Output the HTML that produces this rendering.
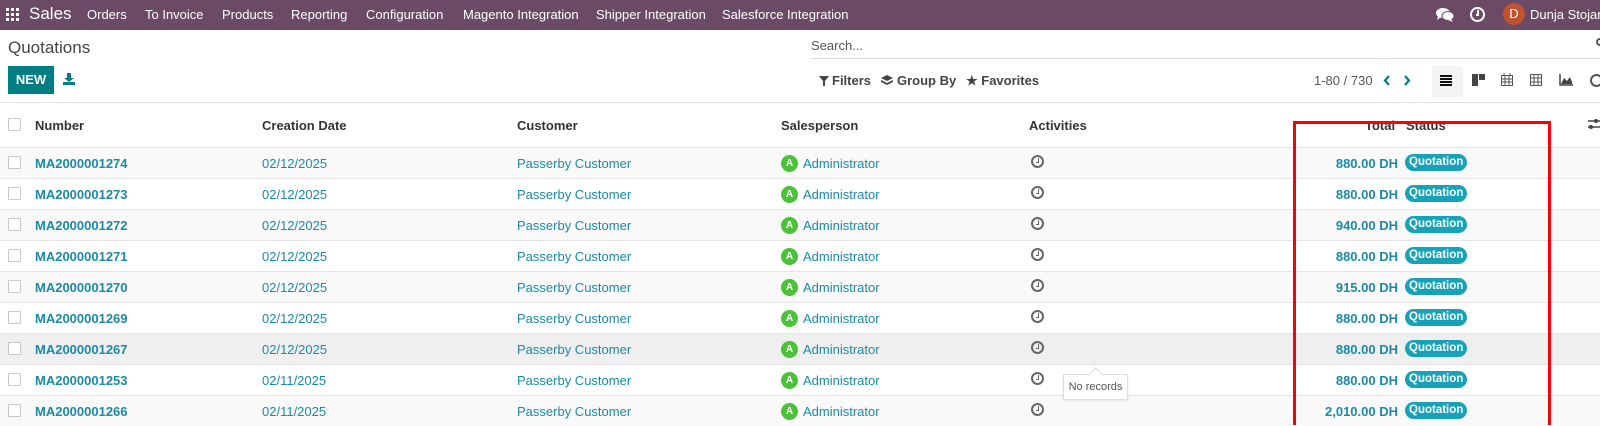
<!DOCTYPE html>
<html><head><meta charset="utf-8"><style>
*{box-sizing:border-box;margin:0;padding:0}
body{width:1600px;height:425px;overflow:hidden;background:#fff;font-family:"Liberation Sans",sans-serif;font-size:13px;color:#374151;position:relative}
.a{position:absolute;white-space:nowrap}
.nav{position:absolute;left:0;top:0;width:1600px;height:30px;background:#6b4a65;color:#fff}
.nav .a{top:7px;font-size:13px}
.row{position:absolute;left:0;width:1600px;height:31px;border-top:1px solid #e5e5e5}
.cb{position:absolute;left:8px;width:13px;height:13px;border:1px solid #c8c8c8;background:#fff;border-radius:1px}
.lnk{color:#1b8aa6}
.b{font-weight:bold}
.badge{position:absolute;left:1405px;background:#17a2b8;color:#fff;font-weight:bold;font-size:11.5px;border-radius:9px;padding:2px 4px;height:17px;line-height:13px}
.av{position:absolute;left:781px;width:17px;height:17px;border-radius:50%;background:#4cc23a;color:#fff;font-size:10px;font-weight:bold;text-align:center;line-height:17px}
.clk{position:absolute;left:1031px;width:13px;height:13px;border:2px solid #666;border-radius:50%}
.clk:after{content:"";position:absolute;left:3px;top:1px;width:2px;height:4px;border-right:1.5px solid #666;border-bottom:1.5px solid #666}
.tot{position:absolute;right:202px;color:#1b8aa6;font-weight:bold}
</style></head><body>
<div class="nav">
 <svg class="a" style="left:6px;top:8px" width="13" height="13" viewBox="0 0 13 13" fill="#fff"><rect x="0" y="0" width="3" height="3"/><rect x="5" y="0" width="3" height="3"/><rect x="10" y="0" width="3" height="3"/><rect x="0" y="5" width="3" height="3"/><rect x="5" y="5" width="3" height="3"/><rect x="10" y="5" width="3" height="3"/><rect x="0" y="10" width="3" height="3"/><rect x="5" y="10" width="3" height="3"/><rect x="10" y="10" width="3" height="3"/></svg>
 <span class="a" style="left:29px;top:4px;font-size:17px">Sales</span>
 <span class="a" style="left:87px">Orders</span>
 <span class="a" style="left:145px">To Invoice</span>
 <span class="a" style="left:222px">Products</span>
 <span class="a" style="left:291px">Reporting</span>
 <span class="a" style="left:366px">Configuration</span>
 <span class="a" style="left:463px">Magento Integration</span>
 <span class="a" style="left:596px">Shipper Integration</span>
 <span class="a" style="left:722px">Salesforce Integration</span>
 <svg class="a" style="left:1436px;top:8px" width="18" height="14" viewBox="0 0 18 14" fill="#fff"><ellipse cx="7" cy="5" rx="7" ry="5"/><path d="M2 8 L1 12 L5 9Z"/><ellipse cx="12" cy="8" rx="6" ry="4.5" stroke="#6b4a65" stroke-width="1"/><path d="M15 11 L17 14 L12 12Z"/></svg>
 <span class="a" style="left:1470px;top:7px;width:15px;height:15px;border:2px solid #fff;border-radius:50%"></span>
 <span class="a" style="left:1476px;top:10px;width:3px;height:6px;border-right:2px solid #fff;border-bottom:2px solid #fff"></span>
 <span class="a" style="left:1503px;top:3px;width:22px;height:22px;border-radius:50%;background:#c0532d;text-align:center;line-height:22px;font-size:13px">D</span>
 <span class="a" style="left:1530px">Dunja Stojanovic</span>
</div>
<span class="a" style="left:8px;top:38px;font-size:17px;color:#444">Quotations</span>
<span class="a" style="left:8px;top:66px;width:46px;height:28px;background:#017e84;color:#fff;font-weight:bold;text-align:center;line-height:28px;font-size:13px">NEW</span>
<svg class="a" style="left:63px;top:73px" width="12" height="12" viewBox="0 0 12 12" fill="#017e84"><path d="M4 0h4v5h3L6 9 1 5h3z"/><rect x="0" y="9" width="12" height="3"/></svg>
<span class="a" style="left:811px;top:38px;color:#555">Search...</span>
<div class="a" style="left:810px;top:58px;width:790px;height:1px;background:#dcdcdc"></div>
<span class="a" style="left:1596px;top:38px;width:8px;height:8px;border:2px solid #555;border-radius:50%"></span>
<svg class="a" style="left:819px;top:76px" width="10" height="10"><path d="M0 0h10L6 5v5H4V5z" fill="#444"/></svg>
<span class="a" style="left:832px;top:73px;color:#444;font-weight:bold">Filters</span>
<svg class="a" style="left:881px;top:75px" width="12" height="11" fill="#444"><path d="M6 0l6 3-6 3-6-3z"/><path d="M0 5l6 3 6-3v2l-6 3-6-3z"/></svg>
<span class="a" style="left:897px;top:73px;color:#444;font-weight:bold">Group By</span>
<span class="a" style="left:966px;top:73px;color:#444;font-weight:bold">&#x2605; Favorites</span>
<span class="a" style="left:1314px;top:73px;color:#555">1-80 / 730</span>
<svg class="a" style="left:1383px;top:75px" width="8" height="11"><path d="M6 1L2 5.5 6 10" stroke="#017e84" stroke-width="2.2" fill="none"/></svg>
<svg class="a" style="left:1403px;top:75px" width="8" height="11"><path d="M2 1l4 4.5L2 10" stroke="#017e84" stroke-width="2.2" fill="none"/></svg>
<div class="a" style="left:1432px;top:66px;width:31px;height:31px;background:#f3f4f6"></div>
<svg class="a" style="left:1440px;top:75px" width="12" height="11"><rect y="0" width="12" height="2" fill="#111"/><rect y="3" width="12" height="2" fill="#111"/><rect y="6" width="12" height="2" fill="#111"/><rect y="9" width="12" height="2" fill="#111"/></svg>
<svg class="a" style="left:1472px;top:74px" width="13" height="12"><rect width="6" height="12" fill="#444"/><rect x="7" width="6" height="6" fill="#444"/></svg>
<svg class="a" style="left:1501px;top:73px" width="12" height="13" fill="none" stroke="#555"><rect x="0.5" y="2.5" width="11" height="10"/><path d="M0 6h12M0 9h12M4 3v10M8 3v10M3 0v3M9 0v3"/></svg>
<svg class="a" style="left:1530px;top:73px" width="12" height="13" fill="none" stroke="#555"><rect x="0.5" y="1.5" width="11" height="11"/><path d="M0 5h12M0 9h12M4 1v12M8 1v12"/></svg>
<svg class="a" style="left:1559px;top:74px" width="14" height="12"><path d="M1 0v11h13" stroke="#444" fill="none" stroke-width="1.5"/><path d="M2 10L5 4 8 7 11 3 13 8v2z" fill="#444"/></svg>
<span class="a" style="left:1590px;top:74px;width:13px;height:13px;border:2px solid #555;border-radius:50%"></span>
<div class="a" style="left:0;top:102px;width:1600px;height:1px;background:#e2e2e2"></div>
<div class="cb" style="top:118px"></div>
<span class="a b" style="left:35px;top:118px;color:#333">Number</span>
<span class="a b" style="left:262px;top:118px;color:#333">Creation Date</span>
<span class="a b" style="left:517px;top:118px;color:#333">Customer</span>
<span class="a b" style="left:781px;top:118px;color:#333">Salesperson</span>
<span class="a b" style="left:1029px;top:118px;color:#333">Activities</span>
<span class="a b" style="left:1365px;top:118px;color:#333">Total</span>
<span class="a b" style="left:1406px;top:118px;color:#333">Status</span>
<svg class="a" style="left:1588px;top:118px" width="12" height="12"><path d="M0 3h12M0 9h12" stroke="#444" stroke-width="1.5"/><circle cx="8" cy="3" r="2" fill="#444"/><circle cx="3" cy="9" r="2" fill="#444"/></svg>

<div class="row" style="top:147px;background:#f9f9f9"><div class="cb" style="top:8px"></div><span class="a lnk b" style="left:35px;top:8px">MA2000001274</span><span class="a lnk" style="left:262px;top:8px">02/12/2025</span><span class="a lnk" style="left:517px;top:8px">Passerby Customer</span><span class="av" style="top:7px">A</span><span class="a lnk" style="left:803px;top:8px">Administrator</span><span class="clk" style="top:7px"></span><span class="tot" style="top:8px">880.00 DH</span><span class="badge" style="top:6px">Quotation</span></div>
<div class="row" style="top:178px"><div class="cb" style="top:8px"></div><span class="a lnk b" style="left:35px;top:8px">MA2000001273</span><span class="a lnk" style="left:262px;top:8px">02/12/2025</span><span class="a lnk" style="left:517px;top:8px">Passerby Customer</span><span class="av" style="top:7px">A</span><span class="a lnk" style="left:803px;top:8px">Administrator</span><span class="clk" style="top:7px"></span><span class="tot" style="top:8px">880.00 DH</span><span class="badge" style="top:6px">Quotation</span></div>
<div class="row" style="top:209px;background:#f9f9f9"><div class="cb" style="top:8px"></div><span class="a lnk b" style="left:35px;top:8px">MA2000001272</span><span class="a lnk" style="left:262px;top:8px">02/12/2025</span><span class="a lnk" style="left:517px;top:8px">Passerby Customer</span><span class="av" style="top:7px">A</span><span class="a lnk" style="left:803px;top:8px">Administrator</span><span class="clk" style="top:7px"></span><span class="tot" style="top:8px">940.00 DH</span><span class="badge" style="top:6px">Quotation</span></div>
<div class="row" style="top:240px"><div class="cb" style="top:8px"></div><span class="a lnk b" style="left:35px;top:8px">MA2000001271</span><span class="a lnk" style="left:262px;top:8px">02/12/2025</span><span class="a lnk" style="left:517px;top:8px">Passerby Customer</span><span class="av" style="top:7px">A</span><span class="a lnk" style="left:803px;top:8px">Administrator</span><span class="clk" style="top:7px"></span><span class="tot" style="top:8px">880.00 DH</span><span class="badge" style="top:6px">Quotation</span></div>
<div class="row" style="top:271px;background:#f9f9f9"><div class="cb" style="top:8px"></div><span class="a lnk b" style="left:35px;top:8px">MA2000001270</span><span class="a lnk" style="left:262px;top:8px">02/12/2025</span><span class="a lnk" style="left:517px;top:8px">Passerby Customer</span><span class="av" style="top:7px">A</span><span class="a lnk" style="left:803px;top:8px">Administrator</span><span class="clk" style="top:7px"></span><span class="tot" style="top:8px">915.00 DH</span><span class="badge" style="top:6px">Quotation</span></div>
<div class="row" style="top:302px"><div class="cb" style="top:8px"></div><span class="a lnk b" style="left:35px;top:8px">MA2000001269</span><span class="a lnk" style="left:262px;top:8px">02/12/2025</span><span class="a lnk" style="left:517px;top:8px">Passerby Customer</span><span class="av" style="top:7px">A</span><span class="a lnk" style="left:803px;top:8px">Administrator</span><span class="clk" style="top:7px"></span><span class="tot" style="top:8px">880.00 DH</span><span class="badge" style="top:6px">Quotation</span></div>
<div class="row" style="top:333px;background:#efefef"><div class="cb" style="top:8px"></div><span class="a lnk b" style="left:35px;top:8px">MA2000001267</span><span class="a lnk" style="left:262px;top:8px">02/12/2025</span><span class="a lnk" style="left:517px;top:8px">Passerby Customer</span><span class="av" style="top:7px">A</span><span class="a lnk" style="left:803px;top:8px">Administrator</span><span class="clk" style="top:7px"></span><span class="tot" style="top:8px">880.00 DH</span><span class="badge" style="top:6px">Quotation</span></div>
<div class="row" style="top:364px"><div class="cb" style="top:8px"></div><span class="a lnk b" style="left:35px;top:8px">MA2000001253</span><span class="a lnk" style="left:262px;top:8px">02/11/2025</span><span class="a lnk" style="left:517px;top:8px">Passerby Customer</span><span class="av" style="top:7px">A</span><span class="a lnk" style="left:803px;top:8px">Administrator</span><span class="clk" style="top:7px"></span><span class="tot" style="top:8px">880.00 DH</span><span class="badge" style="top:6px">Quotation</span></div>
<div class="row" style="top:395px;background:#f9f9f9"><div class="cb" style="top:8px"></div><span class="a lnk b" style="left:35px;top:8px">MA2000001266</span><span class="a lnk" style="left:262px;top:8px">02/11/2025</span><span class="a lnk" style="left:517px;top:8px">Passerby Customer</span><span class="av" style="top:7px">A</span><span class="a lnk" style="left:803px;top:8px">Administrator</span><span class="clk" style="top:7px"></span><span class="tot" style="top:8px">2,010.00 DH</span><span class="badge" style="top:6px">Quotation</span></div>

<div class="a" style="left:1063px;top:374px;width:65px;height:26px;background:#fff;border:1px solid #ddd;box-shadow:0 1px 2px rgba(0,0,0,.1);font-size:11px;color:#555;line-height:24px;text-align:center">No records</div>
<div class="a" style="left:1091px;top:369px;width:9px;height:9px;background:#fff;border-left:1px solid #ddd;border-top:1px solid #ddd;transform:rotate(45deg)"></div>
<div class="a" style="left:1293px;top:121px;width:258px;height:304px;border:3px solid #ff0000;border-bottom:none"></div>
</body></html>
